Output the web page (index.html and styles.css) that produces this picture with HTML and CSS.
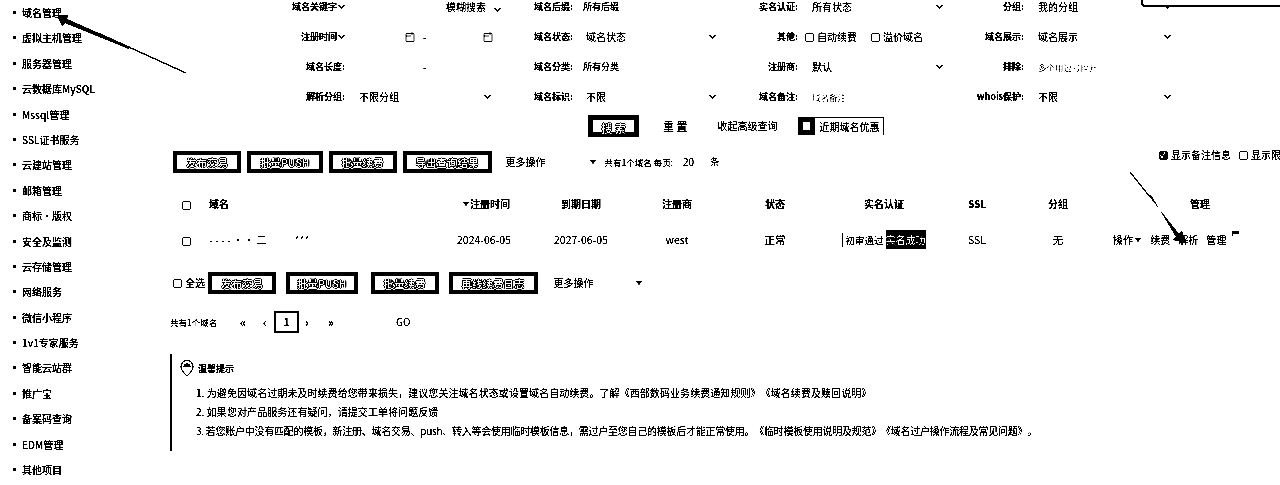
FILE: index.html
```html
<!DOCTYPE html>
<html>
<head>
  <meta charset="utf-8">
  <link rel="stylesheet" href="styles.css">
</head>
<body>
  <div class="page">
    <ul class="sidebar">
      <li>域名管理</li>
      <li>虚拟主机管理</li>
      <li>服务器管理</li>
      <li>云数据库MySQL</li>
      <li>Mssql管理</li>
      <li>SSL证书服务</li>
      <li>云建站管理</li>
      <li>邮箱管理</li>
      <li>商标·版权</li>
      <li>安全及监测</li>
      <li>云存储管理</li>
      <li>网络服务</li>
      <li>微信小程序</li>
      <li>1v1专家服务</li>
      <li>智能云站群</li>
      <li>推广宝</li>
      <li>备案码查询</li>
      <li>EDM管理</li>
      <li>其他项目</li>
    </ul>

    <div class="main">
      <div class="filters">
        <div class="lab">域名关键字 <span class="chev"></span></div>
        <div class="val"><span class="fuzzy">模糊搜索<span class="chev"></span></span></div>
        <div class="lab">域名后缀:</div>
        <div class="val tight">所有后缀</div>
        <div class="lab">实名认证:</div>
        <div class="val sel">所有状态<span class="chev"></span></div>
        <div class="lab">分组:</div>
        <div class="val sel">我的分组<span class="chev"></span></div>

        <div class="lab">注册时间<span class="chev"></span></div>
        <div class="val dates">
          <svg class="cal" viewBox="0 0 10 10"><path d="M1 1.500h8v8H1zM1 4h5M7 0v3" fill="none" stroke="#000" stroke-width=".7"/></svg>
          <span>-</span>
          <svg class="cal" viewBox="0 0 10 10"><path d="M1 1.500h8v8H1zM1 4h5M7 0v3" fill="none" stroke="#000" stroke-width=".7"/></svg>
        </div>
        <div class="lab">域名状态:</div>
        <div class="val sel shift">域名状态<span class="chev"></span></div>
        <div class="lab">其他:</div>
        <div class="val checks">
          <label class="chk"><span class="box"></span>自动续费</label>
          <label class="chk"><span class="box"></span>溢价域名</label>
        </div>
        <div class="lab">域名展示:</div>
        <div class="val sel">域名展示<span class="chev"></span></div>

        <div class="lab">域名长度:</div>
        <div class="val dates"><span class="dash">-</span></div>
        <div class="lab">域名分类:</div>
        <div class="val tight">所有分类</div>
        <div class="lab">注册商:</div>
        <div class="val sel">默认<span class="chev"></span></div>
        <div class="lab">排除:</div>
        <div class="val hint">多个用逗号隔开</div>

        <div class="lab">解析分组:</div>
        <div class="val sel first">不限分组<span class="chev"></span></div>
        <div class="lab">域名标识:</div>
        <div class="val sel shift">不限<span class="chev"></span></div>
        <div class="lab">域名备注:</div>
        <div class="val hint">域名备注</div>
        <div class="lab">whois保护:</div>
        <div class="val sel">不限<span class="chev"></span></div>
      </div>

      <div class="search-row">
        <button class="btn btn-search">搜 索</button>
        <span class="reset">重 置</span>
        <span class="fold">收起高级查询</span>
        <span class="promo"><span class="promo-box"></span>近期域名优惠</span>
      </div>

      <div class="tools">
        <button class="btn">发布交易</button>
        <button class="btn">批量PUSH</button>
        <button class="btn">批量续费</button>
        <button class="btn">导出查询结果</button>
        <span class="more">更多操作<span class="tri"></span></span>
        <span class="total">共有1个域名 每页:</span>
        <span class="per">20</span>
        <span class="unit">条</span>
        <span class="show">
          <label class="chk"><span class="box on">✓</span>显示备注信息</label>
          <label class="chk"><span class="box"></span>显示限制信息</label>
        </span>
      </div>

      <table class="list">
        <colgroup>
          <col class="c-check"><col class="c-name"><col class="c-reg"><col class="c-exp"><col class="c-reg2"><col class="c-state"><col class="c-real"><col class="c-ssl"><col class="c-group"><col class="c-op">
        </colgroup>
        <thead>
          <tr>
            <th><span class="box"></span></th>
            <th class="left">域名</th>
            <th><span class="tri small"></span>注册时间</th>
            <th>到期日期</th>
            <th>注册商</th>
            <th>状态</th>
            <th>实名认证</th>
            <th>SSL</th>
            <th>分组</th>
            <th>管理</th>
          </tr>
        </thead>
        <tbody>
          <tr>
            <td><span class="box"></span></td>
            <td class="left masked">- - - - ·· 二<span class="masked-end">***</span></td>
            <td class="reg-date">2024-06-05</td>
            <td>2027-06-05</td>
            <td>west</td>
            <td>正常</td>
            <td><span class="audit">初审通过</span><span class="pill">实名成功</span></td>
            <td>SSL</td>
            <td>无</td>
            <td class="ops">
              <span>操作 <span class="tri small"></span></span><span>续费</span><span>解析</span><span>管理</span>
              <svg class="flag" viewBox="0 0 9 6"><path d="M1 6V0h7v3H2" fill="#000"/></svg>
            </td>
          </tr>
        </tbody>
      </table>

      <div class="tools tools-low">
        <label class="chk all"><span class="box"></span>全选</label>
        <button class="btn">发布交易</button>
        <button class="btn btn-push">批量PUSH</button>
        <button class="btn">批量续费</button>
        <button class="btn">再线续费日志</button>
        <span class="more">更多操作<span class="tri"></span></span>
      </div>

      <div class="pager">
        <span class="count">共有1个域名</span>
        <span class="pg">«</span>
        <span class="pg">‹</span>
        <span class="pg-on">1</span>
        <span class="pg">›</span>
        <span class="pg">»</span>
        <span class="go">GO</span>
      </div>

      <div class="notice">
        <div class="notice-head">
          <svg class="pin" viewBox="0 0 14 17"><path d="M7 16C3 12 1 9 1 6.500a6 6 0 0 1 12 0C13 9 11 12 7 16z" fill="none" stroke="#000"/><path d="M3.500 7a3.500 3.500 0 0 1 7 0z" fill="#000"/></svg>
          <span>温馨提示</span>
        </div>
        <ol class="tips">
          <li>1. 为避免因域名过期未及时续费给您带来损失&#xFF0C;建议您关注域名状态或设置域名自动续费。了解《西部数码业务续费通知规则》《域名续费及赎回说明》</li>
          <li>2. 如果您对产品服务还有疑问&#xFF0C;请提交工单将问题反馈</li>
          <li>3. 若您账户中没有匹配的模板&#xFF0C;新注册、域名交易、push、转入等会使用临时模板信息&#xFF0C;需过户至您自己的模板后才能正常使用。《临时模板使用说明及规范》《域名过户操作流程及常见问题》。</li>
        </ol>
      </div>
    </div>

    <div class="corner"></div>

    <svg class="arrows" viewBox="0 0 1280 485">
      <line x1="100" y1="34" x2="186" y2="73"/>
      <line x1="1150" y1="197" x2="1130" y2="172"/>
      <polygon points="57,15 68,15 67,19 130,47 129,49 65,23 62,26"/>
      <polygon points="1186,243 1182,231 1179,234 1149,196 1151,195 1176,237 1173,240"/>
    </svg>
  </div>
</body>
</html>
```

FILE: styles.css
```css
* {
  box-sizing: border-box;
}
html, body {
  margin: 0;
  height: 485px;
  overflow: hidden;
  background: #fff;
}
.page {
  display: flex;
  position: relative;
  width: 1280px;
  height: 485px;
  overflow: hidden;
  background: #fff;
  color: #000;
  font-family: "Noto Sans CJK SC", "Liberation Sans", sans-serif;
  font-size: 10px;
  line-height: 14px;
  filter: grayscale(1) brightness(.78) contrast(14);
}

/* left menu */
.sidebar {
  flex: none;
  width: 160px;
  margin: 0;
  padding: 0 0 0 22px;
  list-style: none;
}
.sidebar li {
  position: relative;
  height: 25.4px;
  line-height: 25.4px;
  font-weight: 500;
}
.sidebar li::before {
  content: "";
  position: absolute;
  left: -9px;
  top: 11px;
  width: 3px;
  height: 3px;
  border-radius: 50%;
  background: #000;
}

.main {
  flex: none;
  width: 1120px;
}

/* search form */
.filters {
  display: grid;
  grid-template-columns: 185px 158px 70px 152px 73px 154px 72px 156px;
  grid-template-rows: 31px 30px 30px 30px;
  margin-top: -9px;
}
.lab {
  display: flex;
  align-items: center;
  justify-content: flex-end;
  font-size: 9px;
  font-weight: 700;
  gap: 1px;
}
.val {
  display: flex;
  align-items: center;
  padding-left: 14px;
}
.val.tight {
  padding-left: 10px;
  font-size: 9px;
  font-weight: 500;
}
.sel {
  justify-content: space-between;
  padding-right: 9px;
}
.sel.first {
  padding-right: 12px;
}
.sel.shift {
  padding-left: 13px;
}
.fuzzy {
  margin-left: 87px;
  white-space: nowrap;
}
.fuzzy .chev {
  margin-left: 9px;
}
.chev {
  display: inline-block;
  width: 5px;
  height: 5px;
  margin: -3px 1px 0 1px;
  border-right: 1.5px solid #000;
  border-bottom: 1.5px solid #000;
  transform: rotate(45deg);
}
.dates {
  padding-left: 60px;
  gap: 8px;
}
.cal {
  width: 10px;
  height: 10px;
}
.dates .cal:last-child {
  margin-left: 49px;
}
.dash {
  margin-left: 18px;
}
.checks {
  padding-left: 7px;
  gap: 14px;
  white-space: nowrap;
}
.hint {
  color: #666;
  font-size: 8.500px;
  white-space: nowrap;
}
.chk {
  display: inline-flex;
  align-items: center;
  gap: 3px;
}
.box {
  display: inline-block;
  flex: none;
  width: 9px;
  height: 9px;
  border: 1.5px solid #000;
  border-radius: 2px;
  vertical-align: middle;
}
.box.on {
  background: #000;
  color: #fff;
  font-size: 8px;
  font-weight: 700;
  line-height: 6px;
}

/* buttons */
.btn {
  height: 22px;
  padding: 0 9px;
  border: 4px solid #000;
  background: #fff;
  color: #fff;
  font: 500 10.500px "Noto Sans CJK SC", "Liberation Sans", sans-serif;
  text-shadow: 0 0 1px #000, 0 0 1px #000, 0 0 2px #000, 0 0 2px #000;
  white-space: nowrap;
}
.search-row {
  display: flex;
  align-items: center;
  height: 30px;
  margin-top: -1px;
  padding-left: 428px;
}
.btn-search {
  width: 51px;
  border-width: 5px;
  padding: 0;
  font-size: 11px;
}
.reset {
  margin-left: 24px;
  font-size: 11px;
}
.fold {
  margin-left: 30px;
}
.promo {
  display: flex;
  align-items: center;
  height: 18px;
  margin-left: 21px;
  padding-right: 4px;
  border-right: 1px solid #000;
  border-top: 1px solid #000;
  white-space: nowrap;
}
.promo-box {
  width: 17px;
  height: 18px;
  margin: -1px 4px 0 0;
  border: 5px solid #000;
  background: #fff;
}

.tools {
  display: flex;
  align-items: center;
  height: 22px;
  margin-top: 10px;
  padding-left: 13px;
  gap: 6px;
  white-space: nowrap;
}
.more {
  display: inline-flex;
  align-items: center;
  justify-content: space-between;
  width: 90px;
  margin-left: 8px;
}
.tri {
  display: inline-block;
  width: 0;
  height: 0;
  border-left: 3px solid transparent;
  border-right: 3px solid transparent;
  border-top: 4px solid #000;
}
.tri.small {
  margin-right: 1px;
  vertical-align: 2px;
}
.total {
  margin-left: 3px;
  font-size: 8.500px;
}
.per {
  margin: 0 10px 0 4px;
}
.unit {
  font-size: 9px;
}
.show {
  display: flex;
  gap: 8px;
  width: 122px;
  flex: none;
  margin: -14px -1px 0 auto;
  overflow: hidden;
}

/* domain table */
.list {
  table-layout: fixed;
  width: 1122px;
  margin: 13px 0 0 13px;
  border-collapse: collapse;
}
.c-check { width: 27px; }
.c-name { width: 240px; }
.c-reg { width: 93px; }
.c-exp { width: 96px; }
.c-reg2 { width: 96px; }
.c-state { width: 100px; }
.c-real { width: 118px; }
.c-ssl { width: 68px; }
.c-group { width: 94px; }
.c-op { width: 190px; }
.list th, .list td {
  height: 36px;
  padding: 0;
  text-align: center;
  white-space: nowrap;
}
.list th {
  font-weight: 700;
}
.list td {
  font-size: 10.500px;
}
.list .left {
  text-align: left;
  padding-left: 9px;
}
.list .reg-date {
  padding-right: 5px;
}
.masked {
  color: #666;
}
.masked-end {
  margin-left: 28px;
}
.audit {
  padding-left: 2px;
  border-left: 1px solid #000;
  font-size: 9.500px;
}
.pill {
  margin-left: 2px;
  padding: 2px 0;
  background: #000;
  color: #fff;
  font-size: 10px;
}
.ops {
  position: relative;
}
.list td.ops {
  text-align: left;
  padding-left: 8px;
  font-size: 10px;
}
.ops > span {
  margin-right: 8px;
}
.flag {
  position: absolute;
  left: 126px;
  top: 9px;
  width: 9px;
  height: 6px;
}

.tools-low {
  margin-top: 14px;
}
.tools-low .all {
  width: 29px;
}
.tools-low .btn {
  margin-right: 4px;
}
.tools-low .btn-push {
  padding: 0 7px;
  margin-right: 7px;
}
.tools-low .more {
  width: 88px;
  margin-left: 6px;
}

/* pager */
.pager {
  display: flex;
  align-items: center;
  height: 22px;
  margin-top: 17px;
  padding-left: 10px;
}
.count {
  width: 70px;
  font-size: 8.500px;
}
.pg {
  width: 23px;
  font-weight: 700;
  font-size: 11px;
}
.pg-on {
  width: 25px;
  height: 22px;
  margin: 0 6px 0 -12px;
  border: 2px solid #000;
  text-align: center;
  line-height: 18px;
  font-weight: 700;
}
.go {
  margin-left: 45px;
}

/* notice */
.notice {
  margin: 21px 0 0 10px;
  height: 97px;
  padding: 6px 0 0 8px;
  border-left: 2px solid #000;
}
.notice-head {
  display: flex;
  align-items: center;
  gap: 4px;
  font-size: 9px;
  font-weight: 700;
}
.pin {
  width: 14px;
  height: 17px;
}
.tips {
  margin: 6px 0 0 16px;
  padding: 0;
  list-style: none;
  text-spacing-trim: space-all;
  letter-spacing: .07px;
}
.tips li {
  height: 19px;
  line-height: 19px;
  white-space: nowrap;
}
.tips li:last-child {
  letter-spacing: -.25px;
}

/* bits drawn over the page */
.corner {
  position: absolute;
  left: 1141px;
  top: -20px;
  width: 160px;
  height: 27px;
  border: 2px solid #000;
  border-radius: 4px;
}
.arrows {
  position: absolute;
  left: 0;
  top: 0;
  width: 1280px;
  height: 485px;
  pointer-events: none;
}
.arrows line {
  stroke: #000;
  stroke-width: 1.2;
}
```
